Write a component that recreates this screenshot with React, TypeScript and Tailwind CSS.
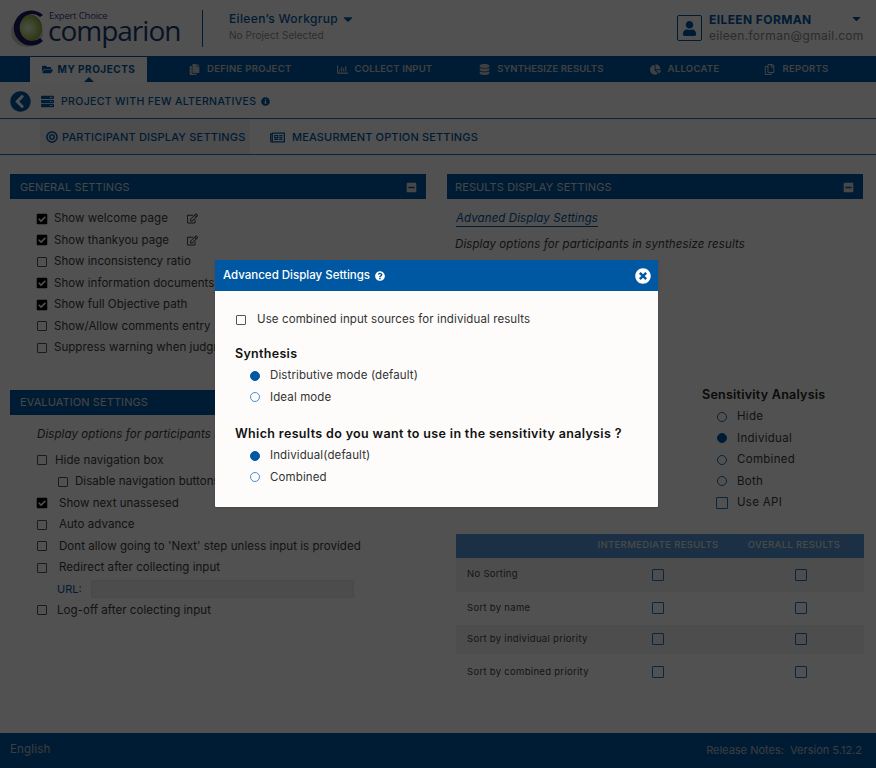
import React from "react";
import { FaFolderOpen, FaCopy, FaRegChartBar, FaDatabase, FaChartPie, FaRegCopy, FaCheckSquare, FaRegEdit, FaInfoCircle, FaQuestionCircle, FaTimesCircle, FaMinusSquare, FaChevronCircleLeft, FaUser, FaCaretDown, FaRegNewspaper, FaBullseye, FaServer } from "react-icons/fa";

const Box = ({ blue = false }: { blue?: boolean }) => (
  <span className={`block shrink-0 rounded-[1px] border ${blue ? "border-[#1f70b8] w-[12px] h-[12px]" : "border-[#555] w-[10px] h-[10px]"}`} />
);
const Check = ({ on = false, label, gap = "ml-[6px]", edit = false }: { on?: boolean; label: string; gap?: string; edit?: boolean }) => (
  <div className="flex items-center h-[21.5px] whitespace-nowrap">
    <span className="w-[12px] flex justify-center shrink-0">{on ? <FaCheckSquare className="text-[12px] text-black" /> : <Box />}</span>
    <span className={`${gap} ${edit ? "w-[115px]" : ""} text-[11.5px] tracking-[0.05px] text-[#3c3c3c]`}>{label}</span>
    {edit && <FaRegEdit className="ml-[18px] text-[11px] text-[#3c3c3c]" />}
  </div>
);
const Radio = ({ on = false, label, dark = false }: { on?: boolean; label: string; dark?: boolean }) => (
  <div className="flex items-center h-[21.5px] whitespace-nowrap">
    <span className={`w-[10px] h-[10px] rounded-full border ${on ? "bg-[#0058a3] border-[#0058a3]" : dark ? "border-[#1f70b8]" : "border-[#4a90d0]"}`} />
    <span className={`ml-[10px] text-[11.5px] ${dark ? "tracking-[0.3px] text-[#3c3c3c]" : "tracking-[0.12px] text-[#333]"}`}>{label}</span>
  </div>
);
const Bar = ({ title, minus = true, pad = "pl-[10px]" }: { title: string; minus?: boolean; pad?: string }) => (
  <div className={`h-[25px] bg-[#0058a3] flex items-center justify-between pt-px ${pad} pr-[9px] text-[11px] tracking-[0.1px] text-[#d8d8d8]`}>
    <span>{title}</span>
    {minus && <FaMinusSquare className="text-[11px] text-[#ddd]" />}
  </div>
);
const Nav = ({ icon, label, cls }: { icon: React.ReactNode; label: string; cls: string }) => (
  <div className={`flex items-center text-[#c8c8c8] text-[9.5px] font-semibold whitespace-nowrap ${cls}`}>
    <span className="text-[11px] mr-[7px]">{icon}</span>{label}
  </div>
);
const Row = ({ label, cls, bg = false }: { label: string; cls: string; bg?: boolean }) => (
  <div className={`grid grid-cols-[116px_172px_120px] items-center ${cls} ${bg ? "bg-[#efefef]" : ""}`}>
    <span className="pl-[11px] text-[9.5px] tracking-[0.3px] text-[#444] whitespace-nowrap">{label}</span>
    <span className="flex justify-center"><Box blue /></span>
    <span className="flex justify-center pr-[6px]"><Box blue /></span>
  </div>
);

export default function App() {
  return (
    <div className="relative w-[876px] h-[768px] overflow-hidden bg-[#fafafa] flex flex-col font-['Inter',sans-serif]">
      <header className="h-[56px] flex items-center shrink-0 relative">
        <svg width="44" height="42" viewBox="0 0 44 42" className="ml-[10px] shrink-0 mt-[2px]">
          <defs>
            <radialGradient id="g" cx="0.5" cy="0.5" r="0.5">
              <stop offset="0" stopColor="#eef2da" /><stop offset="0.55" stopColor="#b9cf7c" /><stop offset="1" stopColor="#86a53c" />
            </radialGradient>
          </defs>
          <ellipse cx="17" cy="24" rx="16" ry="15" fill="#c9c9c9" />
          <circle cx="18" cy="20" r="14" fill="url(#g)" />
          <path d="M33 7 A17.5 17.5 0 1 0 33 33 L30 30 A12.5 13.5 0 1 1 30 9 Z" fill="#191a66" />
        </svg>
        <div className="ml-[-6px] relative h-[42px] w-[136px] shrink-0">
          <span className="absolute left-[1px] top-[5px] text-[9.5px] leading-[8px] text-[#33407a] font-['Open_Sans',sans-serif] tracking-[-0.2px]">Expert Choice</span>
          <span className="absolute left-0 top-[13px] text-[28px] leading-[20px] text-[#173a74] font-['Open_Sans',sans-serif] tracking-[-1px]">comparion</span>
        </div>
        <div className="ml-[18px] w-px h-[37px] bg-[#0058a3] shrink-0" />
        <div className="ml-[26px] shrink-0 mb-[4px]">
          <div className="flex items-center text-[12px] font-medium tracking-[0.35px] text-[#0058a3] leading-[16px]">Eileen’s Workgrup <FaCaretDown className="ml-[3px] text-[14px]" /></div>
          <div className="mt-[1px] text-[10px] tracking-[0.05px] text-[#8f8f8f] leading-[14px]">No Project Selected</div>
        </div>
        <div className="ml-auto mr-[13px] flex items-center">
          <div className="w-[25px] h-[26px] border border-[#0058a3] rounded-[2px] flex items-center justify-center text-[#0058a3] text-[15px]"><FaUser /></div>
          <div className="ml-[7px] w-[154px] mb-[2px]">
            <div className="flex items-center justify-between text-[12px] font-bold tracking-[0.4px] text-[#0058a3] leading-[16px]">EILEEN FORMAN <FaCaretDown className="text-[13px] -mt-[2px]" /></div>
            <div className="text-[12px] tracking-[0.3px] text-[#8a8a8a] leading-[15px]">eileen.forman@gmail.com</div>
          </div>
        </div>
      </header>

      <nav className="h-[26px] bg-[#0058a3] flex items-center shrink-0">
        <div className="relative ml-[30px] w-[117px] h-[25px] mt-[1px] bg-white flex items-center justify-center text-[#0058a3] text-[10px] font-bold tracking-[0.5px] whitespace-nowrap">
          <FaFolderOpen className="text-[11px] mr-[5px]" />MY PROJECTS
          <span className="absolute bottom-0 left-1/2 -translate-x-1/2 w-0 h-0 border-x-[5px] border-x-transparent border-b-[5px] border-b-[#0058a3]" />
        </div>
        <Nav cls="ml-[42px] tracking-[0.3px]" icon={<FaCopy />} label="DEFINE PROJECT" />
        <Nav cls="ml-[45px] tracking-[0.15px]" icon={<FaRegChartBar />} label="COLLECT INPUT" />
        <Nav cls="ml-[47px] tracking-[0.1px]" icon={<FaDatabase />} label="SYNTHESIZE RESULTS" />
        <Nav cls="ml-[46px] tracking-[0.3px]" icon={<FaChartPie />} label="ALLOCATE" />
        <Nav cls="ml-[45px] tracking-[0.3px]" icon={<FaRegCopy />} label="REPORTS" />
      </nav>

      <div className="h-[36px] flex items-center pl-[10px] pt-[3px] shrink-0">
        <FaChevronCircleLeft className="text-[21px] text-[#0058a3]" />
        <FaServer className="ml-[10px] text-[13px] text-[#0058a3]" />
        <span className="ml-[7px] text-[10.5px] font-medium tracking-[0.35px] text-[#0058a3]">PROJECT WITH FEW ALTERNATIVES</span>
        <FaInfoCircle className="ml-[5px] text-[9px] text-[#0058a3]" />
      </div>

      <div className="h-[37px] border-y border-[#1f70b8] flex items-stretch pl-[40px] shrink-0">
        <div className="w-[210px] pt-px pl-[6px] bg-[#f0f0f0] flex items-center text-[#0058a3] text-[11px] font-medium tracking-[0.18px] whitespace-nowrap">
          <FaBullseye className="mr-[4px] text-[12px]" />PARTICIPANT DISPLAY SETTINGS
        </div>
        <div className="ml-[20px] pt-px flex items-center text-[#0058a3] text-[11px] font-medium tracking-[0.15px] whitespace-nowrap">
          <FaRegNewspaper className="mr-[7px] text-[15px]" />MEASURMENT OPTION SETTINGS
        </div>
      </div>

      <main className="flex-1 flex pl-[10px] pt-[19px] gap-[21px]">
        <section className="w-[416px]">
          <Bar title="GENERAL SETTINGS" />
          <div className="pl-[26px] pt-[9px]">
            <Check on label="Show welcome page" edit />
            <Check on label="Show thankyou page" edit />
            <Check label="Show inconsistency ratio" />
            <Check on label="Show information documents" />
            <Check on label="Show full Objective path" />
            <Check label="Show/Allow comments entry" />
            <Check label="Suppress warning when judgments are missing" />
          </div>
          <div className="mt-[31px]"><Bar title="EVALUATION SETTINGS" minus={false} /></div>
          <p className="pl-[27px] mt-[12px] text-[11.5px] italic tracking-[0.1px] text-[#3c3c3c] leading-[14px]">Display options for participants in evaluation</p>
          <div className="pl-[26px] mt-[9px]">
            <Check label="Hide navigation box" gap="ml-[7px]" />
            <div className="pl-[21px]"><Check label="Disable navigation buttons" gap="ml-[6px]" /></div>
            <Check on label="Show next unassesed" gap="ml-[11px]" />
            <Check label="Auto advance" gap="ml-[11px]" />
            <Check label="Dont allow going to 'Next' step unless input is provided" gap="ml-[11px]" />
            <Check label="Redirect after collecting input" gap="ml-[11px]" />
            <div className="flex items-center h-[21px] pl-[21px] text-[11px] text-[#0058a3]">URL:
              <div className="ml-[9px] w-[263px] h-[18px] bg-[#ededed] border border-[#e4e4e4]" />
            </div>
            <Check label="Log-off after colecting input" gap="ml-[9px]" />
          </div>
        </section>

        <section className="w-[416px]">
          <Bar title="RESULTS DISPLAY SETTINGS" pad="pl-[8px]" />
          <div className="pl-[9px] pt-[5px]">
            <span className="inline-block w-[142px] border-b border-[#0058a3] text-[11.5px] italic tracking-[0.1px] text-[#0058a3] leading-[15px] whitespace-nowrap">Advaned Display Settings</span>
            <p className="mt-[9px] -ml-px text-[11.5px] italic tracking-[0.1px] text-[#3c3c3c] leading-[14px]">Display options for participants in synthesize results</p>
          </div>
          <div className="ml-[255px] mt-[136px]">
            <div className="text-[12.5px] font-semibold tracking-[0.25px] text-[#222] leading-[16px]">Sensitivity Analysis</div>
            <div className="pl-[15px] mt-[3px]">
              <Radio dark label="Hide" />
              <Radio dark on label="Individual" />
              <Radio dark label="Combined" />
              <Radio dark label="Both" />
              <div className="flex items-center h-[21.5px]">
                <span className="w-[12px] h-[12px] -ml-[1px] border border-[#1f70b8] rounded-[1px]" />
                <span className="ml-[9px] text-[11.5px] tracking-[0.3px] text-[#3c3c3c]">Use API</span>
              </div>
            </div>
          </div>
          <div className="ml-[9px] mt-[20px] w-[408px]">
            <div className="grid grid-cols-[116px_172px_120px] items-center h-[24px] bg-[#5496d2] text-[9.5px] font-medium tracking-[0.35px] text-[#e2e2e2] whitespace-nowrap">
              <span />
              <span className="text-center">INTERMEDIATE RESULTS</span>
              <span className="text-center pr-[20px]">OVERALL RESULTS</span>
            </div>
            <Row bg cls="h-[34px]" label="No Sorting" />
            <Row cls="h-[33px]" label="Sort by name" />
            <Row bg cls="h-[29px]" label="Sort by individual priority" />
            <Row cls="h-[37px]" label="Sort by combined priority" />
          </div>
        </section>
      </main>

      <footer className="h-[35px] bg-[#0058a3] flex items-center justify-between pl-[10px] pr-[14px] text-[#bdbdbd] shrink-0">
        <span className="-mt-[2px] text-[11.5px] tracking-[0.2px]">English</span>
        <span className="text-[11px] tracking-[0px]">Release Notes:&nbsp; Version 5.12.2</span>
      </footer>

      <div className="absolute inset-0 bg-black/[0.68]" />

      <div className="absolute left-[215px] top-[260px] w-[443px] h-[247px] bg-[#fdfcfb] shadow-sm rounded-b-[1px]">
        <div className="h-[31px] bg-[#0058a3] flex items-center pl-[8px] pr-[7px] text-white">
          <span className="text-[11.5px] font-medium">Advanced Display Settings</span>
          <FaQuestionCircle className="ml-[5px] text-[10px]" />
          <FaTimesCircle className="ml-auto text-[16px]" />
        </div>
        <div className="pl-[20px] pt-[18px]">
          <div className="flex items-center h-[21px] pl-px">
            <Box />
            <span className="ml-[11px] text-[11.5px] tracking-[0.1px] text-[#333] whitespace-nowrap">Use combined input sources for individual results</span>
          </div>
          <div className="mt-[16px] text-[12.5px] font-semibold tracking-[0.3px] text-[#111] leading-[16px]">Synthesis</div>
          <div className="pl-[15px] mt-[3px]">
            <Radio on label="Distributive mode (default)" />
            <Radio label="Ideal mode" />
          </div>
          <div className="mt-[18px] text-[12.5px] font-semibold tracking-[0.35px] text-[#111] leading-[16px] whitespace-nowrap">Which results do you want to use in the sensitivity analysis ?</div>
          <div className="pl-[15px] mt-[3px]">
            <Radio on label="Individual(default)" />
            <Radio label="Combined" />
          </div>
        </div>
      </div>
    </div>
  );
}
